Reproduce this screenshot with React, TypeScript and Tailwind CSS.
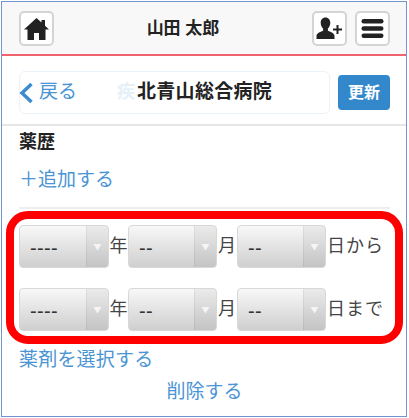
const FONT = "font-['Liberation_Sans','Noto_Sans_CJK_JP',sans-serif]";

function IconButton({ children }: { children: React.ReactNode }) {
  return (
    <button className="w-[35px] h-[35px] flex items-center justify-center bg-white border-2 border-[#d4d4d4] rounded-[5px]">
      {children}
    </button>
  );
}

function DateSelect({ value, className }: { value: string; className: string }) {
  return (
    <div className={`${className} h-[43px] shrink-0 flex rounded-[4px] border border-[#d8d8d8] bg-gradient-to-b from-[#f8f8f8] to-[#cfcfcf] overflow-hidden`}>
      <div className="flex-1 pl-[10px] flex items-center text-[20px] tracking-[0.3px] text-[#333] pt-[2px]">{value}</div>
      <div className="w-[22px] flex items-center justify-center bg-black/5 border-l border-black/5">
        <svg width="9" height="8" viewBox="0 0 9 8">
          <path d="M0.5 1h8L4.500 7.500z" fill="#f5f5f5" />
        </svg>
      </div>
    </div>
  );
}

function DateRow({ suffix, className }: { suffix: string; className?: string }) {
  return (
    <div className={`flex items-center text-[18px] text-[#444] ${className ?? ""}`}>
      <DateSelect value="----" className="w-[90px]" />
      <span className="w-[19px] text-center">年</span>
      <DateSelect value="--" className="w-[89px]" />
      <span className="w-[20px] text-center">月</span>
      <DateSelect value="--" className="w-[89px]" />
      <span className="ml-[1px] tracking-[1px] whitespace-nowrap">{suffix}</span>
    </div>
  );
}

export default function App() {
  return (
    <div className={`${FONT} w-[409px] h-[418px] bg-white pt-[1px] pl-[1px] overflow-hidden`}>
      <div className="relative w-[406px] h-[416px] border border-[#7196cf] overflow-hidden">
        {/* header */}
        <header className="h-[54px] pt-[1px] flex items-center justify-between pl-[17px] pr-[16px] bg-[#f8f8f8] border-b-2 border-[#f0626c]">
          <IconButton>
            <svg width="25" height="22" viewBox="0 0 25 22" fill="#222">
              <path d="M12.500 0 0 11.500h3.500V22h6.500v-7h5v7H21.500V11.500H25L21 7.800V2h-3.500v2.600z" />
            </svg>
          </IconButton>
          <span className="text-[17px] font-bold text-[#222] whitespace-nowrap">山田 太郎</span>
          <div className="flex gap-[8px]">
            <IconButton>
              <svg width="27" height="23" viewBox="0 0 27 23" fill="#222">
                <path d="M9.500 0.500c-3 0-4.800 2.300-4.800 5.300 0 2.400 1 4.500 2.400 5.700v2.300C4 15 .5 16.500.5 19v3h18v-3c0-2.500-3.500-4-6.600-5.200v-2.300c1.400-1.200 2.400-3.300 2.400-5.700 0-3-1.800-5.300-4.800-5.300z" />
                <path d="M20.500 8h2v3.500H26v2h-3.500V17h-2v-3.500H17v-2h3.500z" />
              </svg>
            </IconButton>
            <IconButton>
              <svg width="23" height="21" viewBox="0 0 23 21" fill="#222">
                <rect x="0.500" y="1" width="22" height="4.500" rx="2.200" />
                <rect x="0.500" y="8.200" width="22" height="4.500" rx="2.200" />
                <rect x="0.500" y="15.500" width="22" height="4.500" rx="2.200" />
              </svg>
            </IconButton>
          </div>
        </header>

        {/* title row */}
        <div className="h-[70px] pt-[15px] pl-[17px] pr-[16px] flex justify-between border-b-2 border-[#e6e6e6]">
          <div className="relative w-[311px] h-[43px] flex items-center border border-[#eaf2fa] rounded-[6px] text-[#4a94d4]">
            <svg className="ml-[-1px]" width="15" height="22" viewBox="0 0 15 22" fill="none">
              <path d="M12.500 2 3 11l9.500 9" stroke="#3d8bd0" strokeWidth="3.500" />
            </svg>
            <span className="ml-[5px] text-[19px]">戻る</span>
            <span className="absolute left-[97px] text-[18px] text-[#e6f0f8] font-bold">疾</span>
            <span className="absolute left-[117px] text-[19px] tracking-[0.3px] font-bold text-[#222] whitespace-nowrap">北青山総合病院</span>
          </div>
          <button className="w-[52px] h-[35px] mt-[4px] rounded-[4px] bg-[#3388cc] text-white text-[16px] font-bold">更新</button>
        </div>

        {/* form */}
        <div className="pl-[17px] pr-[16px]">
          <div className="mt-[4px] text-[18px] font-bold text-[#222] leading-[24px]">薬歴</div>
          <div className="mt-[13px] text-[19px] leading-[26px] text-[#4a94d4]">＋追加する</div>
          <div className="mt-[14px] h-[2px] bg-[#eeeeee]" />
          <DateRow suffix="日から" className="mt-[16px]" />
          <DateRow suffix="日まで" className="mt-[20px]" />
          <div className="mt-[15px] text-[19px] leading-[28px] tracking-[0.2px] text-[#4a94d4]">薬剤を選択する</div>
          <div className="mt-[4px] text-[19px] leading-[28px] text-[#4a94d4] text-center">削除する</div>
        </div>

        {/* red callout */}
        <div className="absolute left-[4px] top-[209px] w-[397px] h-[133px] border-[8px] border-[#ff0000] rounded-[22px]" />
      </div>
    </div>
  );
}
